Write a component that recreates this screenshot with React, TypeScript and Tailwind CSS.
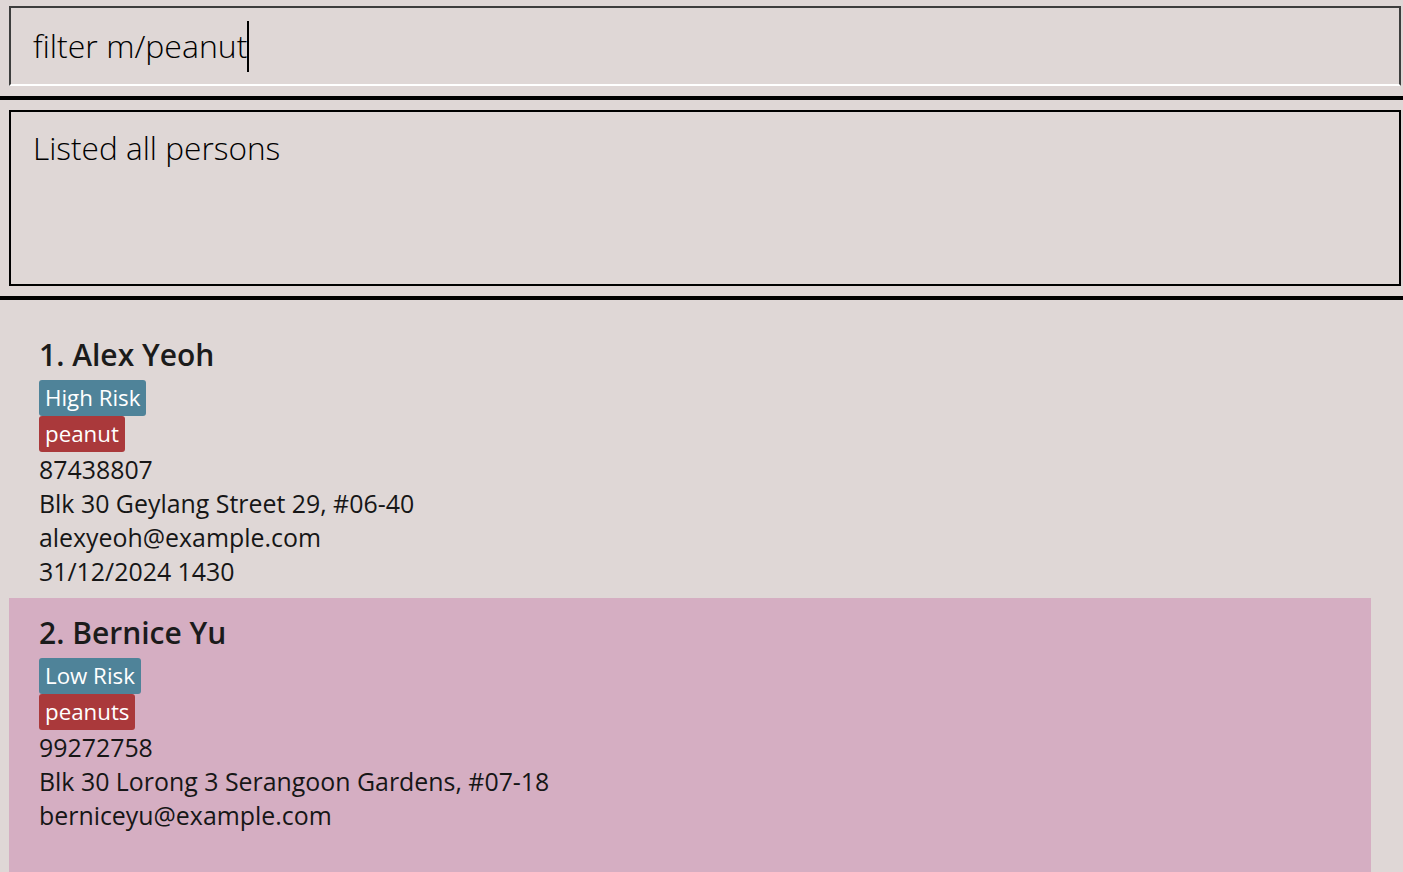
import React from "react";

interface Person {
  name: string;
  risk: string;
  allergies: string[];
  phone: string;
  address: string;
  email: string;
  appointment: string;
}

const persons: Person[] = [
  {
    name: "Alex Yeoh",
    risk: "High Risk",
    allergies: ["peanut"],
    phone: "87438807",
    address: "Blk 30 Geylang Street 29, #06-40",
    email: "alexyeoh@example.com",
    appointment: "31/12/2024 1430",
  },
  {
    name: "Bernice Yu",
    risk: "Low Risk",
    allergies: ["peanuts"],
    phone: "99272758",
    address: "Blk 30 Lorong 3 Serangoon Gardens, #07-18",
    email: "berniceyu@example.com",
    appointment: "",
  },
];

function PersonCard({ person, index, selected }: { person: Person; index: number; selected: boolean }) {
  return (
    <div className={`pl-[30px] pt-[15px] pb-[10px] ${selected ? "bg-[#d5aec2]" : "bg-[#dfd7d6]"}`}>
      <div className="h-[40px] mb-[5px] text-[30px] leading-[40px] font-semibold text-[#1b1b1b] whitespace-nowrap">
        {index}. {person.name}
      </div>
      <div>
        <span className="inline-block h-[36px] px-[6px] rounded-[3px] bg-[#4f8399] text-white text-[22.3px] leading-[36px]">
          {person.risk}
        </span>
      </div>
      {person.allergies.map((a) => (
        <div key={a}>
          <span className="inline-block h-[36px] px-[6px] rounded-[3px] bg-[#aa393b] text-white text-[22.3px] leading-[36px]">
            {a}
          </span>
        </div>
      ))}
      <div className="text-[24.9px] leading-[34px] text-[#161616] whitespace-nowrap">
        <div className="h-[34px]">{person.phone}</div>
        <div className="h-[34px]">{person.address}</div>
        <div className="h-[34px]">{person.email}</div>
        <div className="h-[34px]">{person.appointment}</div>
      </div>
    </div>
  );
}

export default function App() {
  return (
    <div className="min-h-screen bg-[#dfd7d6] font-['Open_Sans',sans-serif] pt-[6px] overflow-hidden">
      <div className="pl-[9px] pr-[2px]">
        <div className="h-[80px] border-2 border-[#3d3d3d] border-b-white flex items-center pl-[22px]">
          <span className="text-[32px] leading-[48px] font-light text-black whitespace-nowrap">filter m/peanut</span>
          <span className="inline-block w-[2px] h-[51px] bg-black"></span>
        </div>
      </div>
      <div className="mt-[10px] h-[4px] bg-black"></div>
      <div className="pl-[9px] pr-[2px] mt-[10px]">
        <div className="h-[176px] border-2 border-black pl-[22px] pt-[12px]">
          <div className="text-[31.6px] leading-[48px] font-light text-black">Listed all persons</div>
        </div>
      </div>
      <div className="mt-[10px] h-[4px] bg-black"></div>
      <div className="pt-[20px] pl-[9px] pr-[32px]">
        {persons.map((p, i) => (
          <PersonCard key={p.name} person={p} index={i + 1} selected={i === 1} />
        ))}
      </div>
    </div>
  );
}
